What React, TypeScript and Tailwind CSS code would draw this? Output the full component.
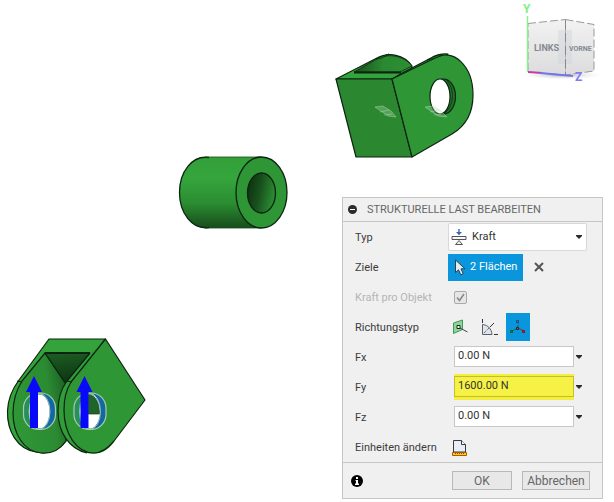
import { useState, type ReactNode } from "react";

const FORCE_FIELDS = [
  { id: "fx", label: "Fx", initial: "0.00 N", highlighted: false },
  { id: "fy", label: "Fy", initial: "1600.00 N", highlighted: true },
  { id: "fz", label: "Fz", initial: "0.00 N", highlighted: false },
];

const DIRECTION_TYPES = [
  { id: "normal", label: "Senkrecht", icon: <NormalIcon /> },
  { id: "angle", label: "Winkel", icon: <AngleIcon /> },
  { id: "vectors", label: "Vektoren", icon: <VectorIcon /> },
];

function Caret() {
  return (
    <svg width="6" height="4" viewBox="0 0 6 4" aria-hidden="true">
      <path d="M0 0h6v1L3 4 0 1z" fill="#2b2b2b" />
    </svg>
  );
}

function ForceIcon() {
  return (
    <svg width="16" height="16" viewBox="0 0 16 16" fill="none" aria-hidden="true">
      <path d="M8 0v4" stroke="#3566b8" strokeWidth="1.4" />
      <path d="M5 3h6L8 6.2z" fill="#3566b8" />
      <path d="M1 7.5h14v3H1z" fill="#f7f7f7" stroke="#555" />
      <path d="M8 11.5l-3.500 4h7z" fill="#eee" stroke="#555" />
    </svg>
  );
}

function CursorIcon() {
  return (
    <svg width="12" height="17" viewBox="0 0 12 17" aria-hidden="true">
      <path d="M1.500 1v12.500l3-2.700 2.300 5 2.400-1.100-2.200-4.900h4z" fill="#e4eaf0" stroke="#2c4254" />
    </svg>
  );
}

function NormalIcon() {
  return (
    <svg width="16" height="16" viewBox="0 0 16 16" fill="none" aria-hidden="true">
      <path d="M1.5 4l9-3v9.500l-9 4z" fill="#8ed39a" stroke="#3f9b50" />
      <path d="M7 8.5l8.500 4.500" stroke="#444" />
      <path d="M5 6.5h3v3H5z" fill="#fff" stroke="#222" />
    </svg>
  );
}

function AngleIcon() {
  return (
    <svg width="17" height="17" viewBox="0 0 17 17" fill="none" aria-hidden="true">
      <path d="M1.500 5.500c5.500.5 9 4.500 9.500 10H1.500z" fill="#dfe3ea" stroke="#5a606b" />
      <path d="M1.500 0v4M13 15.500h4M9 8l4-4" stroke="#333" />
      <path d="M3 14l6-6" stroke="#444" strokeDasharray="1 1" />
    </svg>
  );
}

function VectorIcon() {
  return (
    <svg width="16" height="16" viewBox="0 0 16 16" fill="none" aria-hidden="true">
      <path d="M8 3v6" stroke="#1a4f83" strokeDasharray="2 1" />
      <path d="M8 9l-6 3" stroke="#1f6d3c" />
      <path d="M8 9l6 3" stroke="#8f2733" />
      <path d="M6.5 1.500h2v2h-2z" fill="#2789c8" stroke="#234c78" />
      <path d="M.5 11.500h2v2h-2z" fill="#168a35" stroke="#075922" />
      <path d="M12.500 11.500h2v2h-2z" fill="#c32b32" stroke="#8c1219" />
      <path d="M6.500 8.500h2v2h-2z" fill="#777" stroke="#202830" />
    </svg>
  );
}

function UnitsIcon() {
  return (
    <svg width="16" height="16" viewBox="0 0 16 16" fill="none" aria-hidden="true">
      <path d="M1.500 12V.5h8l4 4V12z" fill="#e9edf4" stroke="#343b46" />
      <path d="M9.5.5v4h4" fill="#fff" stroke="#343b46" />
      <path d="M.5 12.500h14v3H.5z" fill="#f8cb23" stroke="#a95b08" />
      <path d="M3.500 13v1M5.500 13v1M7.500 13v1M9.500 13v1M11.500 13v1" stroke="#8a4a05" />
    </svg>
  );
}

// Shaded parts with their constraint and load symbols
function ModelScene() {
  return (
    <svg
      className="absolute left-0 top-0"
      width="500"
      height="470"
      viewBox="0 0 500 470"
      role="img"
      aria-label="Modell mit Lasten"
    >
      <defs>
        <linearGradient id="tube" x1="0" y1="0" x2="0" y2="1">
          <stop offset="0" stopColor="#339f38" />
          <stop offset="0.3" stopColor="#35a53c" />
          <stop offset="0.65" stopColor="#2b8d32" />
          <stop offset="1" stopColor="#174c1b" />
        </linearGradient>
        <linearGradient id="bore" x1="0" y1="0" x2="1" y2="0.3">
          <stop offset="0" stopColor="#0c2b0f" />
          <stop offset="0.5" stopColor="#174f1c" />
          <stop offset="1" stopColor="#2a8832" />
        </linearGradient>
        <linearGradient id="recess" x1="0" y1="0" x2="0.2" y2="1">
          <stop offset="0" stopColor="#1d5f24" />
          <stop offset="1" stopColor="#0d3512" />
        </linearGradient>
        <linearGradient id="lug" x1="0" y1="0.3" x2="1" y2="0">
          <stop offset="0" stopColor="#2f9636" />
          <stop offset="0.6" stopColor="#2b8b32" />
          <stop offset="1" stopColor="#195720" />
        </linearGradient>
        <linearGradient id="inner" x1="0" y1="0" x2="1" y2="0">
          <stop offset="0" stopColor="#174f1d" />
          <stop offset="0.5" stopColor="#2a8931" />
          <stop offset="1" stopColor="#2c8f33" />
        </linearGradient>
      </defs>

      {/* Bushing */}
      <g stroke="#0c2410" strokeWidth="1.3">
        <path d="M205 157h56.500v71H205c-14 0-25.500-16-25.500-35.500S191 157 205 157z" fill="url(#tube)" stroke="none" />
        <path d="M209 157.500C192 155 179.500 172 179.500 192.500S192 230 209 227.500" fill="none" />
        <path d="M205 157h56M205 228h56" stroke="#174d1b" strokeWidth="0.8" />
        <ellipse cx="261.500" cy="192.500" rx="25.500" ry="35.500" fill="#2f9636" />
        <ellipse cx="261.500" cy="193" rx="14" ry="20" fill="url(#bore)" />
      </g>

      {/* Upper fork */}
      <g stroke="#0c2410" strokeWidth="1.2" strokeLinejoin="round">
        <path d="M336 79l40-20.500c13-7 28-4 36 7.500l-2 13z" fill="#35a33c" />
        <path d="M354 72l22-12.500c12-7 28-4 36 6.500l-12 6z" fill="url(#inner)" strokeWidth="0.8" />
        <path d="M354 72.500h47" strokeWidth="1.800" />
        <path d="M392 79l12-7 27-14c5-3 11-4.500 17-4l-8 10z" fill="#35a33c" />
        <path d="M376 59l4-2 9-3-7 4z" fill="#247b2a" strokeWidth="0.7" />
        <path d="M336 79h56l20 78h-56z" fill="#2b8831" />
        <path d="M392 79l41-20c21-13 40 8 40 36 0 20-9 32-21 39l-40 23z" fill="#2f9636" />
        <path d="M427 60l6-3 6-2 3 .5-8 3z" fill="#246f2a" strokeWidth="0.7" />
        <ellipse cx="443.500" cy="96.500" rx="12" ry="17.500" fill="#217129" />
        <path d="M446 79.500c9 9 9 26-2 34" fill="none" strokeWidth="0.7" />
        <ellipse cx="440" cy="96.500" rx="10" ry="17.500" fill="#fff" />
      </g>
      <g fill="#b8ddbb" fillOpacity="0.3" stroke="#b6dcba" strokeOpacity="0.55" strokeWidth="0.8">
        <path d="M375 107l8-1 8 5 5 6-8-1zM380 112l9-2M384 115l8-1" />
        <path d="M425 107l8-1 8 5 6 6-9-1zM430 112l9-2M434 115l8-1" />
      </g>

      {/* Lower fork */}
      <g stroke="#0c2410" strokeWidth="1.2" strokeLinejoin="round">
        <path d="M49 339h56.500L71 382l-5 59c-7 10-20 13-30 11C17 449 7 431 7.500 411 8 398 13 388 19 380z" fill="#35a33c" />
        <path d="M45 353l21 31v57c-7 10-16 13-25 12-18-2-28-20-28-40 0-13 4-24 9-32z" fill="url(#lug)" />
        <path d="M45 353h45l-24 31z" fill="url(#recess)" />
        <path d="M90 353L67 381c-6 8-9 18-9 30 0 21 11 38 29 42 10 2 19 0 27-11l10-50-18-52z" fill="#319c38" stroke="none" />
        <path d="M90 353L67 381c-6 8-9 18-9 30 0 21 11 38 29 42" fill="none" />
        <path d="M105.500 339L71 382c-5 8-7 17-7 28 0 23 12 43 30 43 9 0 15-6 20-12l31-41z" fill="#2f9636" />
        <path d="M17 381l5 1M67 381l5 1" />
        <path d="M45 353h45" strokeWidth="1.8" />
      </g>

      {/* Loads on the lug bores */}
      {[0, 50.5].map((dx) => (
        <g key={dx} transform={`translate(${dx} 0)`}>
          <rect x="23.500" y="393" width="32" height="36.500" rx="15" fill="#238d72" fillOpacity="0.65" />
          <path d="M42 393.500c18 0 18 35.500 0 35.500 8-8 8-28 0-35.500z" fill="#1168a2" />
          <ellipse cx="39.500" cy="411.500" rx="10" ry="17" fill="#fff" />
          {dx > 0 && <path d="M38 394.500c7 1 11 8 11 19.500H38z" fill="#1e6527" stroke="#123c18" strokeWidth="0.7" />}
          <rect x="23.500" y="393" width="32" height="36.500" rx="15" fill="none" stroke="#a6c8b4" strokeWidth="1.200" />
          <ellipse cx="39.500" cy="411.500" rx="10.500" ry="18" fill="none" stroke="#b9d3c4" strokeWidth="0.8" />
          <path d="M34 376l8 16h-4v36h-8v-36h-4z" fill="#0909fa" />
        </g>
      ))}
    </svg>
  );
}

function ViewCube() {
  return (
    <svg
      className="absolute right-0 top-0"
      width="100"
      height="90"
      viewBox="514 0 100 90"
      role="img"
      aria-label="Ansichtswürfel"
    >
      <defs>
        <linearGradient id="cubeFace" x1="0" y1="0" x2="0" y2="1">
          <stop offset="0" stopColor="#f2f2f2" />
          <stop offset="1" stopColor="#dcdcde" />
        </linearGradient>
        <radialGradient id="cubeShadow">
          <stop offset="0" stopColor="#aaa" />
          <stop offset="1" stopColor="#fff" stopOpacity="0" />
        </radialGradient>
      </defs>
      <ellipse cx="562" cy="75" rx="44" ry="5" fill="url(#cubeShadow)" />
      <g fill="url(#cubeFace)" stroke="#999" strokeDasharray="8 3">
        <path d="M528 23.500l37.500-4V75L528 72z" />
        <path d="M565.500 19.500l28.500 5V71l-28.500 4z" />
      </g>
      <path d="M558 30h14v34h-14z" fill="#cfd3da" fillOpacity="0.45" />
      <path d="M565.500 20v54" stroke="#888" strokeDasharray="9 4" />
      <path d="M527.500 16v56" stroke="#8cf08c" strokeWidth="1.500" />
      <path d="M528 72l14 1" stroke="#c23fa2" strokeWidth="1.800" />
      <path d="M540 73l33 3" stroke="#7474ec" strokeWidth="1.800" />
      <g className="font-[Roboto,sans-serif] font-bold" fill="#858990">
        <text x="534" y="51" fontSize="9">LINKS</text>
        <text x="569" y="51" fontSize="7">VORNE</text>
      </g>
      <g className="font-[Roboto,sans-serif] font-bold" fontSize="12">
        <text x="523" y="13" fill="#83ef83">Y</text>
        <text x="575" y="81" fill="#7c7cf2">Z</text>
      </g>
    </svg>
  );
}

function Row({ label, htmlFor, muted, children }: { label: string; htmlFor?: string; muted?: boolean; children: ReactNode }) {
  return (
    <div className="flex h-[30px] items-center">
      <label htmlFor={htmlFor} className={`w-[93px] shrink-0 pt-0.5 ${muted ? "text-[#b4b4b4]" : "text-[#3c3c3c]"}`}>
        {label}
      </label>
      {children}
    </div>
  );
}

function LoadDialog() {
  const [direction, setDirection] = useState("vectors");

  return (
    <section
      aria-labelledby="dialog-title"
      className="absolute right-[11px] top-[197px] w-[261px] border border-[#c6c6c6] bg-[#f0f0f0] text-[11px] leading-4"
    >
      {/* Header */}
      <header className="flex h-6 items-center gap-2.5 border-b border-[#c6c6c6] pl-[5px]">
        <button type="button" aria-label="Einklappen" className="flex h-[9px] w-[9px] items-center justify-center rounded-full bg-[#2b2b2b]">
          <span className="h-px w-[5px] bg-white" />
        </button>
        <h1 id="dialog-title" className="text-[#666]">STRUKTURELLE LAST BEARBEITEN</h1>
      </header>

      {/* Settings */}
      <div className="pl-3 pr-[15px]">
        <Row label="Typ" htmlFor="typ">
          <div className="relative flex-1">
            <select
              id="typ"
              className="h-7 w-full appearance-none rounded-xs border border-[#d8d8d8] bg-white pl-[23px] text-[11px] text-[#333]"
            >
              <option>Kraft</option>
            </select>
            <span className="pointer-events-none absolute left-[3px] top-1.5">
              <ForceIcon />
            </span>
            <span className="pointer-events-none absolute right-[5px] top-3">
              <Caret />
            </span>
          </div>
        </Row>

        <Row label="Ziele" htmlFor="targets">
          <button id="targets" type="button" className="flex h-[27px] w-[75px] items-center gap-1 bg-[#0a96dc] pl-1.5 text-white">
            <CursorIcon />
            2 Flächen
          </button>
          <button type="button" aria-label="Auswahl aufheben" className="ml-[11px]">
            <svg width="10" height="10" viewBox="0 0 10 10" aria-hidden="true">
              <path d="M1 1l8 8M9 1l-8 8" stroke="#555" strokeWidth="2" />
            </svg>
          </button>
        </Row>

        <Row label="Kraft pro Objekt" htmlFor="per-object" muted>
          <span className="relative ml-1.5 flex">
            <input
              id="per-object"
              type="checkbox"
              defaultChecked
              disabled
              className="h-[13px] w-[13px] appearance-none rounded-xs border border-[#aaa] bg-[#e6e6e6]"
            />
            <svg className="pointer-events-none absolute left-0 top-0" width="13" height="13" viewBox="0 0 13 13" aria-hidden="true">
              <path d="M3 6.500l2.500 3L10 3" fill="none" stroke="#888" strokeWidth="1.500" />
            </svg>
          </span>
        </Row>

        <Row label="Richtungstyp">
          <div className="flex gap-[5px]" role="group" aria-label="Richtungstyp">
            {DIRECTION_TYPES.map((type) => (
              <button
                key={type.id}
                type="button"
                aria-label={type.label}
                aria-pressed={direction === type.id}
                onClick={() => setDirection(type.id)}
                className={`flex h-7 w-6 items-center justify-center ${direction === type.id ? "bg-[#0a96dc]" : ""}`}
              >
                {type.icon}
              </button>
            ))}
          </div>
        </Row>

        {FORCE_FIELDS.map((field) => (
          <Row key={field.id} label={field.label} htmlFor={field.id}>
            <div className={`ml-1.5 flex-1 ${field.highlighted ? "bg-[#f3ef3c] pb-[3px] pt-0.5" : "pb-px"}`}>
              <input
                id={field.id}
                defaultValue={field.initial}
                className={`block h-[21px] w-full border px-[3px] pb-0.5 text-[11px] text-[#333] ${
                  field.highlighted ? "border-[#c4bd32] bg-[#f5f245]" : "border-[#c8c8c8] bg-white"
                }`}
              />
            </div>
            <button type="button" aria-label={`${field.label} Optionen`} className="ml-0.5 mr-[5px]">
              <Caret />
            </button>
          </Row>
        ))}

        <Row label="Einheiten ändern" htmlFor="units">
          <button id="units" type="button" className="ml-1 pt-0.5">
            <UnitsIcon />
          </button>
        </Row>
      </div>

      {/* Footer */}
      <footer className="flex h-9 items-center border-t border-[#c6c6c6] pl-2 pr-3 text-xs text-[#666]">
        <button type="button" aria-label="Info" className="mr-auto">
          <svg width="12" height="12" viewBox="0 0 12 12" aria-hidden="true">
            <circle cx="6" cy="6" r="6" fill="#000" />
            <path d="M5 2h2v2H5zM4.500 5H7v3.500h1V10H4V8.500h1V6h-.5z" fill="#fff" />
          </svg>
        </button>
        <button type="button" className="h-[19px] w-[60px] border border-[#b8b8b8] bg-[#e8e8e8] leading-4">OK</button>
        <button type="button" className="ml-2.5 h-[19px] w-[68px] border border-[#b8b8b8] bg-[#e8e8e8] leading-4">Abbrechen</button>
      </footer>
    </section>
  );
}

export default function App() {
  return (
    <main className="relative min-h-screen overflow-hidden bg-white font-[Roboto,sans-serif]">
      <ModelScene />
      <ViewCube />
      <LoadDialog />
    </main>
  );
}
